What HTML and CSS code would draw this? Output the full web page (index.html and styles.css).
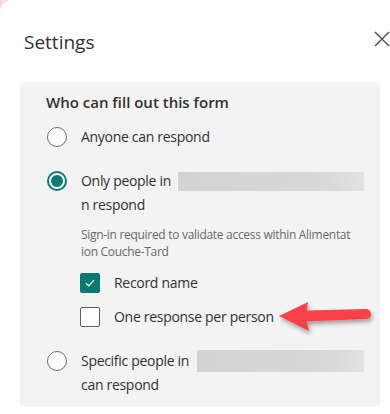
FILE: index.html
```html
<!DOCTYPE html>
<html lang="en">
<head>
    <meta charset="UTF-8">
    <meta name="viewport" content="width=device-width, initial-scale=1.0">
    <title>Settings</title>
    <link rel="stylesheet" href="styles.css">
</head>
<body>

<div class="dialog">
    <div class="dialog-header">
        <h2>Settings</h2>
        <button class="close-btn" aria-label="Close">
            <svg width="16" height="16" viewBox="0 0 16 16">
                <path d="M1 1 L15 15 M15 1 L1 15" stroke="#4a4a4a" stroke-width="1.4" fill="none"/>
            </svg>
        </button>
    </div>

    <div class="panel">
        <h3>Who can fill out this form</h3>

        <div class="option">
            <span class="radio"></span>
            <div class="option-text">
                <div class="line">Anyone can respond</div>
            </div>
        </div>

        <div class="option">
            <span class="radio checked"></span>
            <div class="option-text">
                <div class="line">Only people in <span class="redacted first"></span></div>
                <div class="line">n respond</div>
            </div>
        </div>

        <div class="sub">
            <p class="hint">Sign-in required to validate access within Alimentat<br>ion Couche-Tard</p>
            <div class="check-row">
                <span class="checkbox checked">
                    <svg width="10" height="8" viewBox="0 0 10 8">
                        <path d="M1 4.2 L3.7 6.8 L9 1.2" stroke="#fff" stroke-width="1.2" fill="none"/>
                    </svg>
                </span>
                <span>Record name</span>
            </div>
            <div class="check-row">
                <span class="checkbox"></span>
                <span>One response per person</span>
            </div>
        </div>

        <div class="option last">
            <span class="radio"></span>
            <div class="option-text">
                <div class="line">Specific people in <span class="redacted second"></span></div>
                <div class="line">can respond</div>
            </div>
        </div>

        <!-- annotation arrow -->
        <svg class="arrow" width="100" height="44" viewBox="0 0 100 44">
            <defs>
                <filter id="shadow" x="-20%" y="-30%" width="140%" height="170%">
                    <feDropShadow dx="1.5" dy="3" stdDeviation="2" flood-color="#000" flood-opacity="0.35"/>
                </filter>
            </defs>
            <g filter="url(#shadow)">
                <path d="M3 18 L32 4 L31 12.5 L90 11 L90 21 L31 23.5 L33 33 Z" fill="#fb434a"/>
                <circle cx="90" cy="16" r="5" fill="#fb434a"/>
            </g>
        </svg>
    </div>
</div>

</body>
</html>
```

FILE: styles.css
```css
html, body {
    height: 100%;
}
body {
    margin: 0;
    background: #f2ddd7;
    font-family: "Segoe UI", "Open Sans", "Noto Sans", sans-serif;
    color: #323130;
}
.dialog {
    background: #fff;
    height: 414px;
    border-top-left-radius: 12px;
    overflow: hidden;
}
.dialog-header {
    display: flex;
    justify-content: space-between;
    align-items: flex-start;
    padding: 29px 0 0 24px;
    height: 53px;
}
.dialog-header h2 {
    margin: 0;
    font-size: 19px;
    font-weight: 400;
    line-height: 26px;
}
.close-btn {
    background: none;
    border: none;
    padding: 0;
    margin-top: 2px;
    width: 16px;
    height: 16px;
    display: block;
}
.close-btn svg {
    display: block;
}
.panel {
    position: relative;
    margin: 0 10px 0 20px;
    background: #f3f3f3;
    border-radius: 5px;
    padding: 9px 0 10px 26px;
}
.panel h3 {
    margin: 0 0 12px 0;
    font-size: 15px;
    font-weight: 600;
    line-height: 22px;
}
.option {
    display: flex;
    align-items: flex-start;
    gap: 14px;
    margin-bottom: 20px;
    font-size: 14px;
    letter-spacing: -0.3px;
}
.option.last {
    margin-bottom: 0;
}
.option .line {
    line-height: 24px;
    height: 24px;
    display: flex;
    align-items: center;
    white-space: nowrap;
}
.radio {
    width: 18px;
    height: 18px;
    border: 1px solid #6a6a6a;
    border-radius: 50%;
    background: #fff;
    margin-top: 2px;
    margin-left: 1px;
    flex-shrink: 0;
}
.radio.checked {
    border: 2px solid #077a74;
    width: 16px;
    height: 16px;
    position: relative;
}
.radio.checked::after {
    content: "";
    position: absolute;
    left: 2px;
    top: 2px;
    width: 12px;
    height: 12px;
    border-radius: 50%;
    background: #077a74;
}
.redacted {
    display: inline-block;
    height: 19px;
    background: linear-gradient(90deg, #d3d3d3 0%, #d6d6d6 50%, #d9d9d9 80%, #e2e2e2 100%);
    margin-left: 7px;
}
.redacted.first {
    width: 186px;
}
.redacted.second {
    width: 167px;
    height: 22px;
    margin-left: 8px;
}
.sub {
    padding-left: 34px;
    margin-top: -11px;
    margin-bottom: 20px;
}
.hint {
    margin: 0 0 11px 1px;
    font-size: 12px;
    line-height: 17px;
    color: #6b6966;
    letter-spacing: -0.3px;
}
.check-row {
    display: flex;
    align-items: center;
    gap: 14px;
    font-size: 14px;
    letter-spacing: -0.3px;
    line-height: 24px;
    margin-bottom: 10px;
}
.check-row:last-child {
    margin-bottom: 0;
}
.checkbox {
    width: 18px;
    height: 18px;
    border: 1px solid #5f5f5f;
    border-radius: 2px;
    background: #fff;
    flex-shrink: 0;
    display: flex;
    align-items: center;
    justify-content: center;
}
.checkbox.checked {
    background: #077a74;
    border-color: #077a74;
}
.arrow {
    position: absolute;
    left: 256px;
    top: 216px;
}
```
